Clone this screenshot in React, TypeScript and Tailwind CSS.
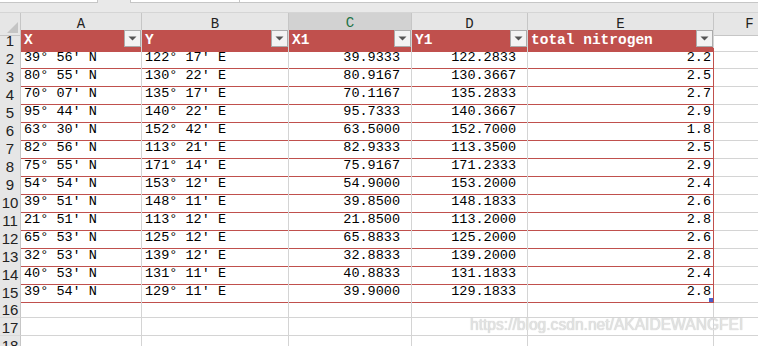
const cols = ["A", "B", "C", "D", "E", "F"];

const data: [string, string, string, string, string][] = [
  ["39° 56′ N", "122° 17′ E", "39.9333", "122.2833", "2.2"],
  ["80° 55′ N", "130° 22′ E", "80.9167", "130.3667", "2.5"],
  ["70° 07′ N", "135° 17′ E", "70.1167", "135.2833", "2.7"],
  ["95° 44′ N", "140° 22′ E", "95.7333", "140.3667", "2.9"],
  ["63° 30′ N", "152° 42′ E", "63.5000", "152.7000", "1.8"],
  ["82° 56′ N", "113° 21′ E", "82.9333", "113.3500", "2.5"],
  ["75° 55′ N", "171° 14′ E", "75.9167", "171.2333", "2.9"],
  ["54° 54′ N", "153° 12′ E", "54.9000", "153.2000", "2.4"],
  ["39° 51′ N", "148° 11′ E", "39.8500", "148.1833", "2.6"],
  ["21° 51′ N", "113° 12′ E", "21.8500", "113.2000", "2.8"],
  ["65° 53′ N", "125° 12′ E", "65.8833", "125.2000", "2.6"],
  ["32° 53′ N", "139° 12′ E", "32.8833", "139.2000", "2.8"],
  ["40° 53′ N", "131° 11′ E", "40.8833", "131.1833", "2.4"],
  ["39° 54′ N", "129° 11′ E", "39.9000", "129.1833", "2.8"],
];

const headers = ["X", "Y", "X1", "Y1", "total nitrogen"];

const gridCols = "grid grid-cols-[21px_121px_147px_123px_116px_186px_72px]";

function FilterButton() {
  return (
    <span className="absolute right-0 top-0 flex h-[17px] w-[17px] items-center justify-center border border-[#ababab] bg-[#f3f3f3]">
      <svg width="9" height="5" viewBox="0 0 9 5">
        <path d="M0.5 0.5h8L4.5 4.5z" fill="#555" />
      </svg>
    </span>
  );
}

function RowNum({ n }: { n: number }) {
  return (
    <div className="flex items-center justify-center border-r border-b border-r-[#c6c6c6] border-b-[#d9d9d9] bg-[#e6e6e6] pt-[1px] font-['Liberation_Sans',sans-serif] text-[15px] leading-none text-[#222]">
      {n}
    </div>
  );
}

export default function App() {
  return (
    <div className="relative h-[346px] w-[758px] overflow-hidden bg-white font-['Liberation_Mono',monospace] text-[13.5px] text-black">
      {/* formula bar remnant */}
      <div className="h-[12px] bg-[#e9e9e9]">
        <div className="flex h-[3px]">
          <div className="w-[98px] border-b border-r border-[#c6c6c6] bg-white" />
          <div className="w-[32px]" />
          <div className="w-[110px] border-b border-l border-r border-[#c6c6c6] bg-white" />
          <div className="flex-1 border-b border-[#c6c6c6] bg-white" />
        </div>
      </div>

      {/* column letters */}
      <div className={`${gridCols} h-[18px] border-t border-[#d5d5d5]`}>
        <div className="relative border-r border-b border-[#c6c6c6] bg-[#e6e6e6]">
          <svg className="absolute bottom-[2px] right-[2px]" width="11" height="11" viewBox="0 0 11 11">
            <path d="M11 0v11H0z" fill="#c4c4c4" />
          </svg>
        </div>
        {cols.map((c) =>
          c === "C" ? (
            <div key={c} className="flex items-center justify-center border-r border-r-[#c6c6c6] border-b-2 border-b-[#217346] bg-[#d2d2d2] text-[14px] text-[#217346]">
              {c}
            </div>
          ) : (
            <div key={c} className="flex items-center justify-center border-r border-b border-[#c6c6c6] bg-[#e6e6e6] text-[14px] text-[#222]">
              {c}
            </div>
          )
        )}
      </div>

      {/* row 1 – table header */}
      <div className={`${gridCols} h-[18px]`}>
        <RowNum n={1} />
        {headers.map((h) => (
          <div key={h} className="relative flex items-center border-r border-[#d4d4d4] bg-[#c0504d] pl-[3px] text-[14.5px] font-bold text-white">
            {h}
            <FilterButton />
          </div>
        ))}
        <div className="border-r border-b border-[#d4d4d4]" />
      </div>

      {/* data rows */}
      {data.map((r, i) => (
        <div key={i} className={`${gridCols} h-[18px]`}>
          <RowNum n={i + 2} />
          <div className="flex items-center border-r border-b border-r-[#d4d4d4] border-b-[#c0504d] pl-[3px] whitespace-pre">{r[0]}</div>
          <div className="flex items-center border-r border-b border-r-[#d4d4d4] border-b-[#c0504d] pl-[3px] whitespace-pre">{r[1]}</div>
          <div className="flex items-center justify-end border-r border-b border-r-[#d4d4d4] border-b-[#c0504d] pr-[11px]">{r[2]}</div>
          <div className="flex items-center justify-end border-r border-b border-r-[#d4d4d4] border-b-[#c0504d] pr-[11px]">{r[3]}</div>
          <div className="relative flex items-center justify-end border-r border-b border-[#c0504d] pr-[2px]">
            {r[4]}
            {i === data.length - 1 && (
              <span className="absolute bottom-0 right-0 h-[4px] w-[4px] bg-[#4a5ec9]" />
            )}
          </div>
          <div className="border-r border-b border-[#d4d4d4]" />
        </div>
      ))}

      {/* empty rows */}
      {[16, 17, 18].map((n) => (
        <div key={n} className={`${gridCols} h-[18px]`}>
          <RowNum n={n} />
          {cols.map((c) => (
            <div key={c} className="border-r border-b border-[#d4d4d4]" />
          ))}
        </div>
      ))}

      {/* watermark */}
      <div className="absolute left-[470px] top-[315px] whitespace-nowrap font-['Liberation_Sans',sans-serif] text-[15.6px] leading-[20px] text-[#e3e3e3] [text-shadow:0_0_1px_#bdbdbd]">
        https://blog.csdn.net/AKAIDEWANGFEI
      </div>
    </div>
  );
}
